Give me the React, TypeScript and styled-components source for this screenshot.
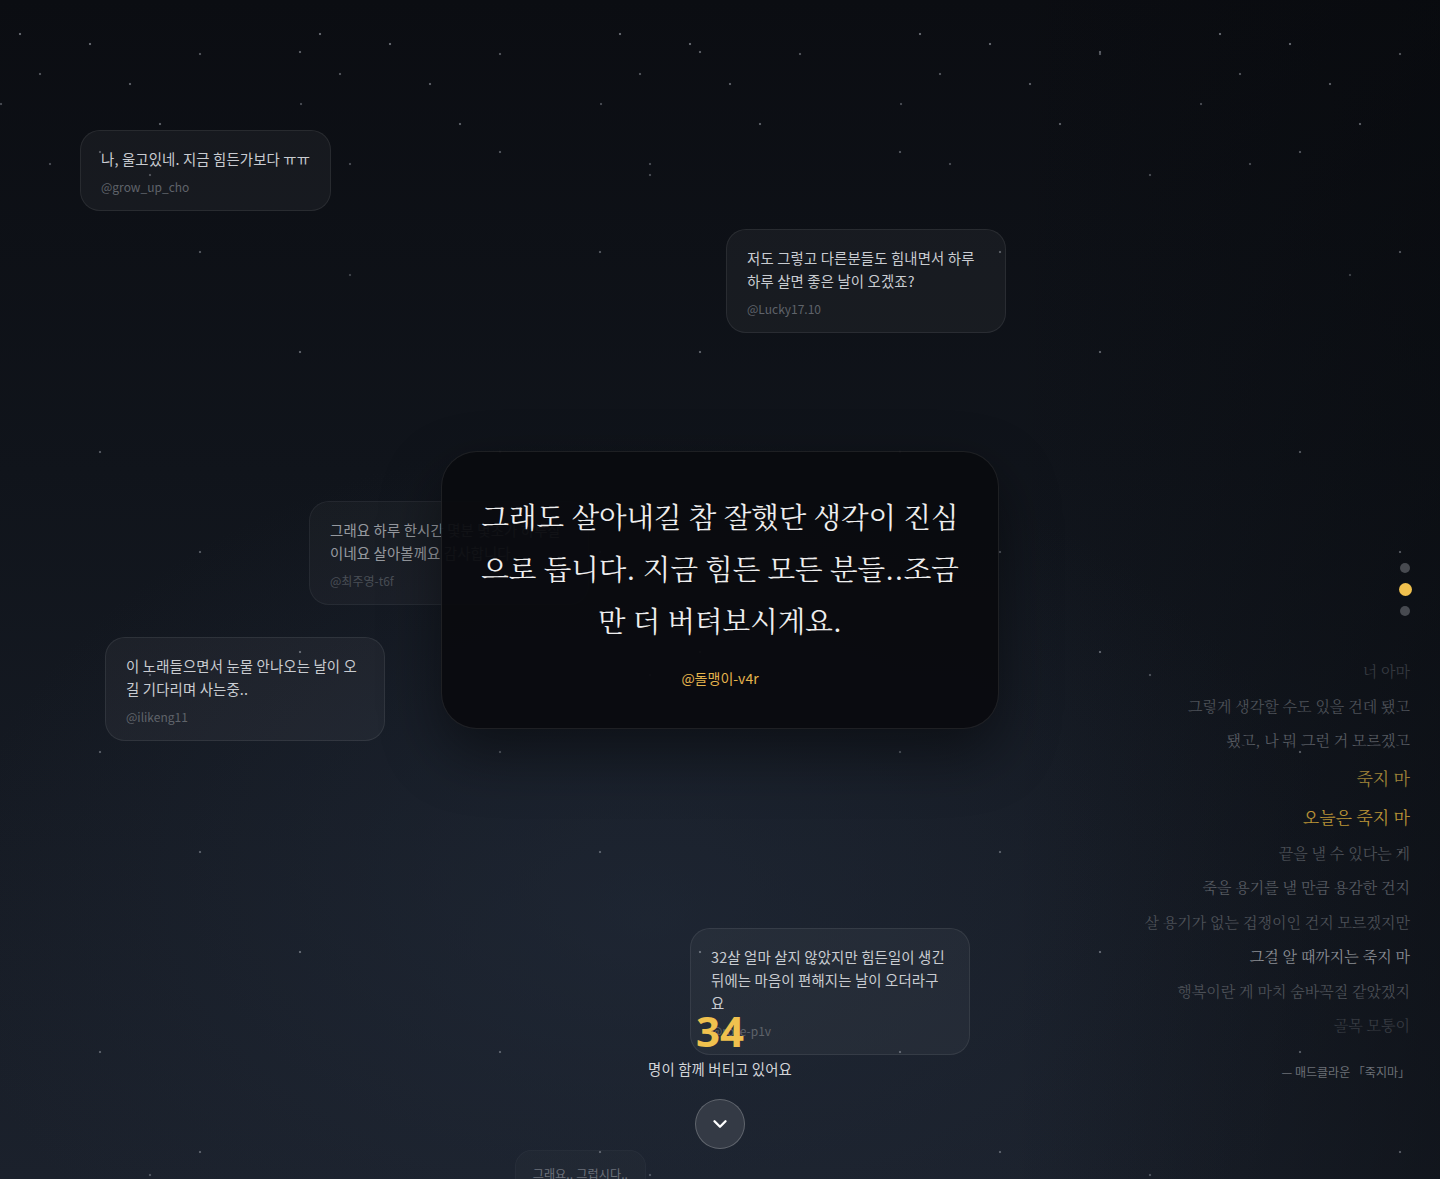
import React from "react";
import styled, { createGlobalStyle } from "styled-components";
import { ChevronDown } from "lucide-react";

const colors = {
  gold: "#f0c14e",
  goldSoft: "#e5b44d",
  text: "#c9ccd1",
  handle: "#5f636a",
};

type Comment = {
  id: number;
  text: string;
  handle: string;
  x: number;
  y: number;
  fade: number;
  scale?: number;
};

const comments: Comment[] = [
  { id: 1, text: "나, 울고있네. 지금 힘든가보다 ㅠㅠ", handle: "@grow_up_cho", x: 80, y: 130, fade: 1 },
  { id: 2, text: "저도 그렇고 다른분들도 힘내면서 하루 하루 살면 좋은 날이 오겠죠?", handle: "@Lucky17.10", x: 726, y: 229, fade: 1 },
  { id: 3, text: "그래요 하루 한시간 몇분 몇초가 하루살이네요 살아볼께요 감사합니다", handle: "@최주영-t6f", x: 309, y: 501, fade: 0.72 },
  { id: 4, text: "이 노래들으면서 눈물 안나오는 날이 오길 기다리며 사는중..", handle: "@ilikeng11", x: 105, y: 637, fade: 1 },
  { id: 5, text: "32살 얼마 살지 않았지만 힘든일이 생긴 뒤에는 마음이 편해지는 날이 오더라구요", handle: "@rose-p1v", x: 690, y: 928, fade: 1 },
  { id: 6, text: "그래요.. 그럽시다..", handle: "@night-k2a", x: 515, y: 1150, fade: 0.45, scale: 0.84 },
];

type Tone = "faint" | "dim" | "mid" | "bright" | "gold" | "goldBright";
type Lyric = { text: string; tone: Tone };

const lyrics: Lyric[] = [
  { text: "너 아마", tone: "faint" },
  { text: "그렇게 생각할 수도 있을 건데 됐고", tone: "dim" },
  { text: "됐고, 나 뭐 그런 거 모르겠고", tone: "mid" },
  { text: "죽지 마", tone: "gold" },
  { text: "오늘은 죽지 마", tone: "goldBright" },
  { text: "끝을 낼 수 있다는 게", tone: "dim" },
  { text: "죽을 용기를 낼 만큼 용감한 건지", tone: "mid" },
  { text: "살 용기가 없는 겁쟁이인 건지 모르겠지만", tone: "dim" },
  { text: "그걸 알 때까지는 죽지 마", tone: "bright" },
  { text: "행복이란 게 마치 숨바꼭질 같았겠지", tone: "dim" },
  { text: "골목 모퉁이", tone: "faint" },
];

const toneColor: Record<Tone, string> = {
  faint: "#363a41",
  dim: "#4c5057",
  mid: "#565a61",
  bright: "#8b8e94",
  gold: "#9f8338",
  goldBright: "#b89236",
};

const isGold = (t: Tone) => t === "gold" || t === "goldBright";

const GlobalStyle = createGlobalStyle`
  html, body {
    margin: 0;
    padding: 0;
    background: #0b0d12;
  }
  body {
    font-family: "Noto Sans CJK KR", "Noto Sans", sans-serif;
    color: ${colors.text};
  }
  * {
    box-sizing: border-box;
  }
`;

function App() {
  return (
    <>
      <GlobalStyle />
      <StyledPage>
        {comments.map((c) => (
          <StyledComment
            key={c.id}
            $x={c.x}
            $y={c.y}
            $fade={c.fade}
            $scale={c.scale ?? 1}
          >
            <p>{c.text}</p>
            <span>{c.handle}</span>
          </StyledComment>
        ))}

        <StyledStage>
          <StyledFeatured>
            <StyledQuote>
              그래도 살아내길 참 잘했단 생각이 진심으로 듭니다. 지금 힘든 모든
              분들..조금만 더 버텨보시게요.
            </StyledQuote>
            <StyledAuthor>@돌맹이-v4r</StyledAuthor>
          </StyledFeatured>

          <StyledCounter>
            <strong>34</strong>
            <span>명이 함께 버티고 있어요</span>
            <StyledScrollButton aria-label="아래로">
              <ChevronDown size={22} strokeWidth={2.6} color="#ffffff" />
            </StyledScrollButton>
          </StyledCounter>
        </StyledStage>

        <StyledDots>
          <StyledDot />
          <StyledDot $active />
          <StyledDot />
        </StyledDots>

        <StyledLyrics>
          {lyrics.map((l) => (
            <StyledLyricLine key={l.text} $tone={l.tone}>
              {l.text}
            </StyledLyricLine>
          ))}
          <StyledCredit>— 매드클라운 「죽지마」</StyledCredit>
        </StyledLyrics>
      </StyledPage>
    </>
  );
}

const star = (x: number, y: number, a = 0.45, r = 1) =>
  `radial-gradient(circle at ${x}px ${y}px, rgba(200,205,215,${a}) 0, rgba(200,205,215,${a}) ${r}px, transparent ${r + 0.6}px)`;

const StyledPage = styled.div`
  position: relative;
  width: 100%;
  height: 1179px;
  overflow: hidden;
  background-color: #0e1117;
  background-image: ${[
      star(20, 34),
      star(90, 44),
      star(200, 54, 0.35),
      star(40, 74, 0.35),
      star(130, 84, 0.4),
      star(1, 104, 0.3),
      star(160, 124, 0.4),
      star(50, 164, 0.3),
    ].join(",")},
    ${[star(300, 52, 0.4), star(100, 152, 0.35), star(200, 252, 0.35)].join(",")},
    ${star(150, 175, 0.3)},
    ${star(350, 275, 0.25)},
    linear-gradient(90deg, transparent 70%, rgba(6, 8, 11, 0.45) 100%),
    radial-gradient(ellipse 65% 55% at 45% 78%, rgba(36, 46, 62, 0.5), transparent 75%),
    linear-gradient(180deg, #0b0d12 0%, #10141b 40%, #1b212c 100%);
  background-size: ${Array(8).fill("300px 300px").join(",")},
    ${Array(3).fill("400px 300px").join(",")}, 500px 500px, 1000px 1000px,
    100% 100%, 100% 100%, 100% 100%;
  background-repeat: ${Array(8).fill("repeat-x").join(",")},
    ${Array(3).fill("repeat").join(",")}, repeat, repeat, no-repeat, no-repeat,
    no-repeat;
`;

const StyledComment = styled.div<{
  $x: number;
  $y: number;
  $fade: number;
  $scale: number;
}>`
  position: absolute;
  left: ${({ $x }) => $x}px;
  top: ${({ $y }) => $y}px;
  width: fit-content;
  max-width: 280px;
  padding: 16px 20px 14px;
  border-radius: 20px;
  background: rgba(255, 255, 255, 0.045);
  border: 1px solid rgba(255, 255, 255, 0.075);
  opacity: ${({ $fade }) => $fade};
  transform: scale(${({ $scale }) => $scale});
  transform-origin: top left;
  & > p {
    margin: 0;
    font-size: 0.9rem;
    letter-spacing: 0.01em;
    line-height: 23px;
    color: ${colors.text};
  }
  & > span {
    display: block;
    margin-top: 8px;
    font-size: 0.75rem;
    line-height: 18px;
    color: ${colors.handle};
  }
`;

const StyledStage = styled.main`
  position: relative;
  z-index: 2;
  height: 100%;
  display: flex;
  flex-direction: column;
  align-items: center;
  padding: 451px 0 30px;
`;

const StyledFeatured = styled.section`
  width: 558px;
  padding: 38px 34px 40px;
  border-radius: 36px;
  background: rgba(9, 11, 15, 0.95);
  border: 1px solid rgba(255, 255, 255, 0.085);
  box-shadow: 0 24px 60px rgba(0, 0, 0, 0.45);
  text-align: center;
`;

const StyledQuote = styled.p`
  margin: 0;
  font-family: "Noto Serif CJK KR", "Noto Sans CJK KR", serif;
  font-size: 28.5px;
  font-weight: 400;
  line-height: 52px;
  color: #eeeeee;
`;

const StyledAuthor = styled.div`
  margin-top: 22px;
  font-size: 14px;
  line-height: 20px;
  color: ${colors.goldSoft};
`;

const StyledCounter = styled.div`
  margin-top: auto;
  display: flex;
  flex-direction: column;
  align-items: center;
  & > strong {
    font-family: "Noto Sans", "Noto Sans CJK KR", sans-serif;
    font-size: 42px;
    font-weight: 700;
    line-height: 42px;
    color: ${colors.gold};
  }
  & > span {
    margin-top: 7px;
    font-size: 0.9rem;
    letter-spacing: 0.01em;
    line-height: 20px;
    color: #d3d5d9;
  }
`;

const StyledScrollButton = styled.button`
  margin-top: 20px;
  width: 50px;
  height: 50px;
  border-radius: 50%;
  display: flex;
  align-items: center;
  justify-content: center;
  padding: 0;
  background: #343a45;
  border: 1px solid rgba(255, 255, 255, 0.22);
  cursor: pointer;
`;

const StyledDots = styled.nav`
  position: absolute;
  z-index: 3;
  right: 28px;
  top: 563px;
  width: 14px;
  display: flex;
  flex-direction: column;
  align-items: center;
  gap: 10px;
`;

const StyledDot = styled.span<{ $active?: boolean }>`
  width: ${({ $active }) => ($active ? 13 : 10)}px;
  height: ${({ $active }) => ($active ? 13 : 10)}px;
  border-radius: 50%;
  background: ${({ $active }) => ($active ? colors.gold : "#474a50")};
`;

const StyledLyrics = styled.aside`
  position: absolute;
  z-index: 1;
  right: 30px;
  top: 654px;
  display: flex;
  flex-direction: column;
  align-items: flex-end;
  text-align: right;
  font-family: "Noto Serif CJK KR", "Noto Sans CJK KR", serif;
`;

const StyledLyricLine = styled.div<{ $tone: Tone }>`
  font-size: ${({ $tone }) => (isGold($tone) ? 17 : 15)}px;
  line-height: ${({ $tone }) => (isGold($tone) ? 39 : 34.5)}px;
  color: ${({ $tone }) => toneColor[$tone]};
  white-space: nowrap;
`;

const StyledCredit = styled.div`
  margin-top: 20px;
  font-family: "Noto Sans CJK KR", sans-serif;
  font-size: 12px;
  line-height: 18px;
  color: #6c7077;
`;

export default App;
